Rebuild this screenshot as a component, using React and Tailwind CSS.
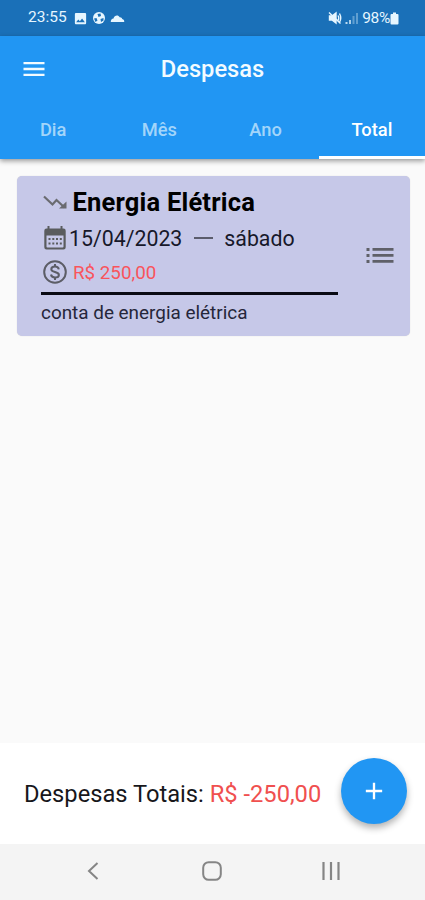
import { useState } from 'react';
import { MdMenu, MdAdd, MdImage } from 'react-icons/md';

const tabs = ['Dia', 'Mês', 'Ano', 'Total'];

const expenses = [
  {
    id: 1,
    title: 'Energia Elétrica',
    date: '15/04/2023',
    weekday: 'sábado',
    amount: 'R$ 250,00',
    description: 'conta de energia elétrica',
  },
];

function TrendIcon() {
  return (
    <svg className="h-7 w-7 text-[#6a6b70]" viewBox="0 0 28 28" fill="none" stroke="currentColor" strokeWidth="2.2">
      <path d="M3 8.5L11.5 16.5L15.500 12L23.500 19.5" />
      <path d="M18 20.5H25.500V13.500Z" fill="currentColor" stroke="none" />
    </svg>
  );
}

function CalendarIcon() {
  return (
    <svg className="h-7 w-7 text-[#5a5c5e]" viewBox="0 0 28 28" fill="currentColor">
      <path
        fillRule="evenodd"
        d="M6.500 2H8.500V4.500H19.500V2H21.500V4.500H22.500Q24.700 4.500 24.700 6.700V23.300Q24.700 25.500 22.500 25.500H5.500Q3.300 25.500 3.300 23.300V6.700Q3.300 4.500 5.500 4.500H6.500ZM5.500 11.500V22.700Q5.500 23.500 6.300 23.500H21.700Q22.500 23.500 22.500 22.700V11.500Z"
      />
      <path d="M7.500 14h2v2h-2zM11.300 14h2v2h-2zM15 14h2v2h-2zM18.800 14h2v2h-2zM7.500 18.500h2v2h-2zM11.300 18.500h2v2h-2zM15 18.500h2v2h-2zM18.800 18.500h2v2h-2z" />
    </svg>
  );
}

function MoneyIcon() {
  return (
    <svg className="h-7 w-7 text-[#5c5d66]" viewBox="0 0 28 28" fill="none" stroke="currentColor" strokeWidth="2">
      <circle cx="14" cy="14" r="10.8" />
      <path d="M14 6V9M14 19V22" />
      <path d="M17.800 11.300C17.500 9.400 16 8.600 14 8.600C12 8.600 10.300 9.600 10.300 11.200C10.300 12.900 12 13.500 14 14C16 14.500 17.900 15.100 17.900 16.900C17.900 18.500 16.100 19.400 14 19.400C11.900 19.400 10.300 18.400 10 16.500" />
    </svg>
  );
}

function StatusBar() {
  return (
    <div className="flex h-9 shrink-0 items-center justify-between bg-[#1a70b8] pl-7 pr-[26px] text-[#e6f6ff]">
      <div className="flex items-center">
        <span className="w-[41px] text-[15.5px]">23:55</span>
        <MdImage className="ml-[4px] h-[15px] w-[15px]" />
        <svg className="ml-[4px] h-[14px] w-[14px]" viewBox="0 0 14 14" fill="currentColor">
          <circle cx="7" cy="7" r="6" />
          <path className="fill-[#1a70b8]" d="M5.500 3L8.500 2.500L9 5L6.500 6ZM2 7.500L4.500 7L5.500 9.500L3.500 11ZM8.500 8L11.500 7L11.500 9.500L9 11Z" />
        </svg>
        <svg className="ml-[4px] h-[14px] w-[15px]" viewBox="0 0 15 14" fill="currentColor">
          <path d="M0.800 11C0.500 9 2 7.700 3.500 7.500C4.200 4 8.500 3.600 9.600 6.200C11 6 12 6.800 12.200 7.900C13.800 8.200 14.500 9.500 14.200 11Z" />
        </svg>
      </div>
      <div className="flex items-center">
        <svg className="h-[14px] w-[14px]" viewBox="0 0 14 14" fill="none" stroke="currentColor" strokeWidth="1.4">
          <path d="M1.500 5H4L8 2V12L4 9H1.500Z" fill="currentColor" />
          <path d="M10 4.500Q11.500 7 10 9.500M11.500 2.500Q14 7 11.500 11.500M1 1.500L12.500 12.500" />
        </svg>
        <svg className="ml-[3px] h-[13px] w-[14px]" viewBox="0 0 14 13" fill="currentColor">
          <rect x="0.5" y="10" width="2" height="2" opacity="0.8" />
          <rect x="4" y="8" width="2" height="4" opacity="0.7" />
          <rect x="7.5" y="4" width="2" height="8" opacity="0.35" />
          <rect x="11" y="1" width="2" height="11" opacity="0.35" />
        </svg>
        <span className="ml-[3px] pt-[1px] text-[15.5px] tracking-[-0.3px]">98%</span>
        <svg className="h-[13px] w-[9px]" viewBox="0 0 9 13" fill="currentColor">
          <path d="M3 0.500H6V2H7.500Q8.500 2 8.500 3V11.500Q8.500 12.500 7.500 12.500H1.500Q0.500 12.500 0.500 11.500V3Q0.500 2 1.500 2H3Z" />
        </svg>
      </div>
    </div>
  );
}

function ExpenseCard({ expense }) {
  return (
    <div className="flex h-40 items-center justify-between rounded-[5px] bg-[#c6c8e8] pl-6 pr-3 shadow-[0_0_1px_rgba(0,0,0,0.2)]">
      <div className="h-full w-[297px] whitespace-nowrap pt-2">
        <div className="flex h-9 items-center">
          <TrendIcon />
          <h2 className="ml-[3.5px] pb-px text-[25.5px] font-bold leading-9 tracking-[0.2px] text-black">{expense.title}</h2>
        </div>
        <div className="flex h-9 items-center text-[21.3px] text-[#17182a]">
          <CalendarIcon />
          <span className="pt-px">{expense.date}</span>
          <span className="ml-3 mr-[11px] h-[2px] w-[19px] bg-[#5b5c6c]" />
          <span className="pt-px">{expense.weekday}</span>
        </div>
        <div className="flex h-8 items-center">
          <MoneyIcon />
          <span className="ml-1 pt-[2px] text-[18.8px] text-[#f9545c]">{expense.amount}</span>
        </div>
        <div className="mt-[4px] h-[3px] bg-[#0a0b14]" />
        <p className="mt-[4px] text-[18.9px] leading-7 text-[#25263a]">{expense.description}</p>
      </div>
      <button aria-label="Opções">
        <svg className="mb-[2px] h-9 w-9 text-[#5f6068]" viewBox="0 0 36 36" fill="currentColor">
          <path d="M4.500 11h3v3h-3zM4.500 17h3v3h-3zM4.500 23h3v3h-3zM10.500 11h21v2.800h-21zM10.500 17h21v2.800h-21zM10.500 23h21v2.800h-21z" />
        </svg>
      </button>
    </div>
  );
}

export default function App() {
  const [activeTab, setActiveTab] = useState('Total');

  return (
    <div className="flex h-[900px] w-[425px] flex-col overflow-hidden bg-[#fafafa] font-[Roboto,sans-serif]">
      <StatusBar />

      <header className="z-10 shrink-0 bg-[#2196f3] shadow-[0_2px_5px_rgba(0,0,0,0.4)]">
        <div className="grid h-[66px] grid-cols-[60px_1fr_60px] items-center px-[19.5px]">
          <button aria-label="Menu">
            <MdMenu className="h-7 w-7 text-[#f3fbff]" />
          </button>
          <h1 className="text-center text-[23.7px] font-medium leading-8 text-[#f3fbff]">Despesas</h1>
        </div>
        <nav className="grid h-[57px] grid-cols-4">
          {tabs.map((tab) => (
            <button
              key={tab}
              onClick={() => setActiveTab(tab)}
              className={`border-b-[3px] pt-px text-[18.3px] font-medium ${
                tab === activeTab ? 'border-white text-white' : 'border-transparent text-[#a3d5fa]'
              }`}
            >
              {tab}
            </button>
          ))}
        </nav>
      </header>

      <main className="flex-1 pl-[17px] pr-[15px] pt-[17px]">
        {expenses.map((expense) => (
          <ExpenseCard key={expense.id} expense={expense} />
        ))}
      </main>

      <footer className="flex h-[101px] shrink-0 items-center justify-between bg-white pl-6 pr-[18px]">
        <p className="whitespace-nowrap pt-[2px] text-[23.7px] text-[#17171b]">
          Despesas Totais: <span className="text-[#f0504f]">R$ -250,00</span>
        </p>
        <button
          aria-label="Adicionar despesa"
          className="mb-[5px] flex h-[66px] w-[66px] items-center justify-center rounded-full bg-[#2196f3] shadow-[0_4px_7px_rgba(0,0,0,0.3)]"
        >
          <MdAdd className="h-7 w-7 text-white" />
        </button>
      </footer>

      {/* Android navigation */}
      <div className="flex h-14 shrink-0 items-center justify-between bg-[#f4f4f4] pb-[2px] pl-[83px] pr-[84px] text-[#858585]">
        <svg className="h-5 w-5" viewBox="0 0 20 20" fill="none" stroke="currentColor" strokeWidth="2">
          <path d="M14.500 2L6 10L14.500 18" />
        </svg>
        <svg className="h-5 w-5" viewBox="0 0 20 20" fill="none" stroke="currentColor" strokeWidth="2">
          <rect x="1.2" y="1.2" width="17.6" height="17.6" rx="5.5" />
        </svg>
        <svg className="h-5 w-5" viewBox="0 0 20 20" fill="none" stroke="currentColor" strokeWidth="2.2">
          <path d="M2.500 1V19M10 1V19M17.500 1V19" />
        </svg>
      </div>
    </div>
  );
}
